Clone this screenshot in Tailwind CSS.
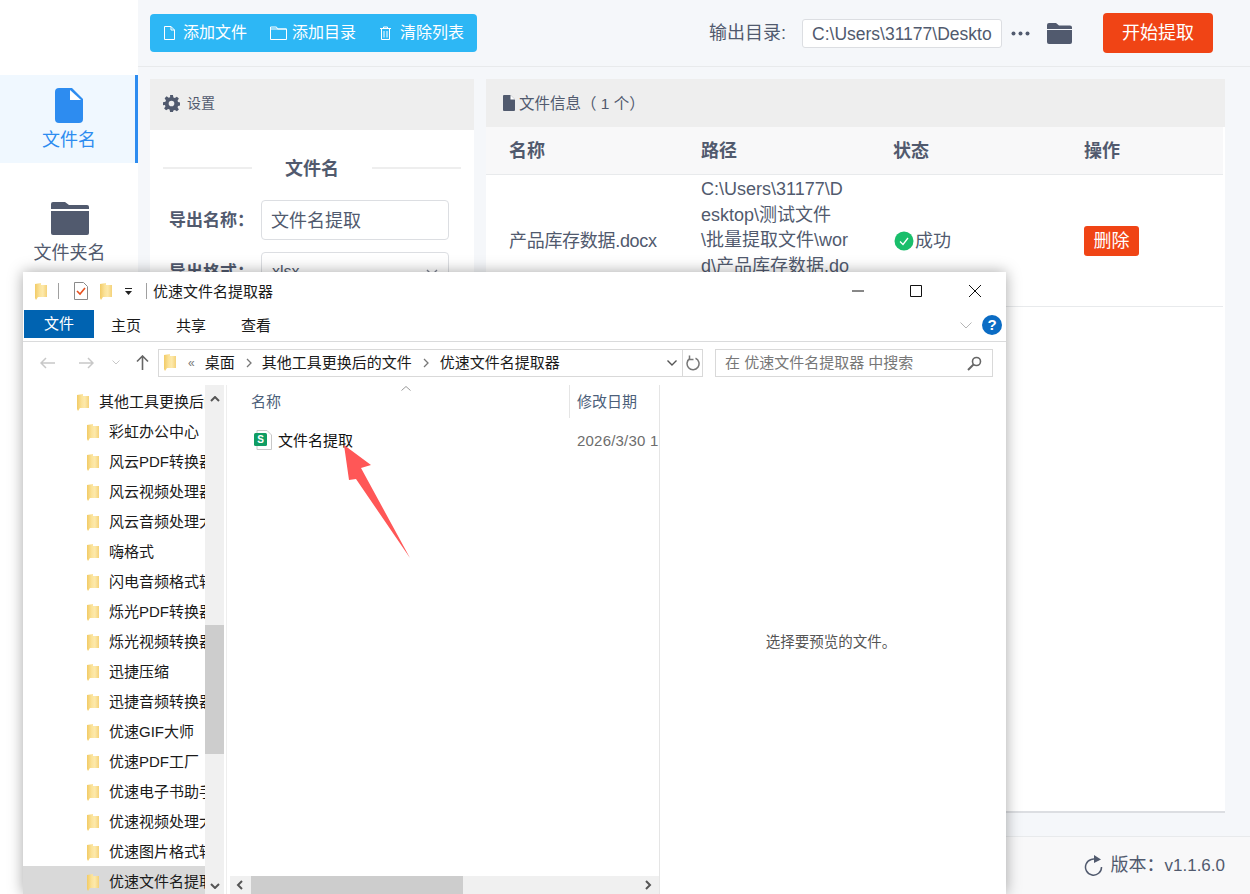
<!DOCTYPE html>
<html lang="zh-CN">
<head>
  <meta charset="UTF-8" />
  <title>文件名提取</title>
  <script src="https://cdn.jsdelivr.net/npm/@tailwindcss/browser@4"></script>
</head>
<body class="font-['Liberation_Sans','Noto_Sans_CJK_SC',sans-serif]">
  <!-- shared folder glyph for the explorer window -->
  <svg class="absolute w-0 h-0">
    <defs>
      <linearGradient id="fg" x1="0" x2="1" y1="0" y2="0"><stop offset="0" stop-color="#f2cb66"/><stop offset=".4" stop-color="#fbe39b"/><stop offset=".65" stop-color="#fde9ab"/><stop offset="1" stop-color="#f4d27a"/></linearGradient>
    </defs>
    <symbol id="yf" viewBox="0 0 12 17"><path d="M0 1L6 0V2H12V14H3L1 17 0 15z" fill="url(#fg)"/></symbol>
  </svg>

  <div class="relative w-[1250px] h-[894px] overflow-hidden flex bg-[#f5f7fa] text-[#515a6e]">
    <!-- sidebar -->
    <aside class="w-[138px] bg-white pt-[75px] shrink-0">
      <div class="h-[88px] bg-[#f0f8ff] border-r-[3px] border-[#2d8cf0] flex flex-col items-center pt-[13px] pl-[3px] text-[#2d8cf0]">
        <svg class="w-[28px] h-[35px]" viewBox="0 0 28 35"><path d="M4 0h13l11 11v20a4 4 0 0 1-4 4H4a4 4 0 0 1-4-4V4a4 4 0 0 1 4-4z" fill="#2d8cf0"/><path d="M15 2v10h11z" fill="#fff"/></svg>
        <span class="text-[18px] leading-[24px] mt-[5px]">文件名</span>
      </div>
      <div class="flex flex-col items-center pt-[39px] pl-[1px]">
        <svg class="w-[38px] h-[33px]" viewBox="0 0 38 33"><path d="M2 0h12l4 3h18a2 2 0 0 1 2 2v2H0V2a2 2 0 0 1 2-2z" fill="#515a6e"/><path d="M0 9h38v22a2 2 0 0 1-2 2H2a2 2 0 0 1-2-2z" fill="#515a6e"/></svg>
        <span class="text-[18px] leading-[24px] mt-[6px]">文件夹名</span>
      </div>
    </aside>

    <main class="flex-1 flex flex-col min-w-0">
      <!-- toolbar -->
      <div class="h-[67px] border-b border-[#e8eaec] flex items-center pl-[12px] shrink-0">
        <div class="w-[327px] h-[38px] bg-[#2db7f5] rounded-[4px] flex items-center text-white text-[16px] pl-[14px]">
          <svg class="w-[11px] h-[14px] mr-[8px]" viewBox="0 0 11 14" fill="none" stroke="#fff"><path d="M.5.500h6.500l3.500 3.500v9.500H.5zM7 .5v3.500h3.500"/></svg>
          <span>添加文件</span>
          <svg class="w-[17px] h-[14px] ml-[23px] mr-[5px]" viewBox="0 0 17 14" fill="none" stroke="#fff"><path d="M.5 1h6l1 2h9v10.500H.5zM.5 3h16"/></svg>
          <span>添加目录</span>
          <svg class="w-[11px] h-[14px] ml-[24px] mr-[9px]" viewBox="0 0 11 14" fill="none" stroke="#fff"><path d="M0 2.500h11M3.500 2.500V1h4v1.500M1.500 3v10.500h8V3M4 5v6.500M7 5v6.500"/></svg>
          <span>清除列表</span>
        </div>
        <span class="ml-[232px] text-[18px]">输出目录:</span>
        <div class="ml-[16px] w-[200px] h-[29px] bg-white border border-[#dcdee2] rounded-[3px] pl-[9px] text-[17.500px] leading-[28px] overflow-hidden whitespace-nowrap">C:\Users\31177\Deskto</div>
        <svg class="w-[19px] h-[5px] ml-[9px]" viewBox="0 0 19 5" fill="#515a6e"><circle cx="2.500" cy="2.500" r="2"/><circle cx="9.500" cy="2.500" r="2"/><circle cx="16.500" cy="2.500" r="2"/></svg>
        <svg class="w-[25px] h-[21px] ml-[17px]" viewBox="0 0 25 21" fill="#515a6e"><path d="M2 0h7l3 2.500h11a2 2 0 0 1 2 2V6H0V2a2 2 0 0 1 2-2z"/><path d="M0 7h25v12a2 2 0 0 1-2 2H2a2 2 0 0 1-2-2z"/></svg>
        <button class="ml-[31px] w-[110px] h-[40px] bg-[#f04415] rounded-[4px] text-white text-[18px]">开始提取</button>
      </div>

      <!-- panels -->
      <div class="flex-1 flex gap-[12px] pl-[12px] pr-[25px] pt-[12px] min-h-0">
        <section class="w-[324px] shrink-0 bg-white h-[733px]">
          <div class="h-[51px] bg-[#eeeeee] flex items-center pl-[13px] pb-[2px] text-[14px]">
            <svg class="w-[17px] h-[17px] mr-[7px]" viewBox="0 0 24 24" fill="#515a6e"><path fill-rule="evenodd" d="M10 0h4l.7 3.400 2 .8L19.600 2.300l2.800 2.800-1.900 2.900.8 2 3.400.7v4l-3.400.7-.8 2 1.900 2.900-2.800 2.800-2.900-1.900-2 .8L14 24h-4l-.7-3.400-2-.8-2.900 1.900-2.800-2.800 1.900-2.900-.8-2L0 14.300v-4l3.400-.7.8-2L2.300 4.700l2.800-2.800L8 3.800l2-.8zM12 8a4 4 0 1 0 0 8 4 4 0 0 0 0-8z"/></svg>
            设置
          </div>
          <div class="flex items-center pl-[13px] pr-[13px] mt-[25px] h-[26px]">
            <div class="w-[89px] h-[2px] bg-[#eeeeee]"></div>
            <div class="flex-1 text-center text-[18px] font-bold pt-[2px]">文件名</div>
            <div class="w-[89px] h-[2px] bg-[#eeeeee]"></div>
          </div>
          <div class="flex items-center mt-[19px] pl-[19px]">
            <span class="w-[92px] text-[17px] font-bold pt-[2px]">导出名称：</span>
            <div class="w-[188px] h-[40px] border border-[#dcdee2] rounded-[4px] pl-[9px] text-[18px] leading-[40px]">文件名提取</div>
          </div>
          <div class="flex items-center mt-[12px] pl-[19px]">
            <span class="w-[92px] text-[17px] font-bold pt-[2px]">导出格式：</span>
            <div class="w-[188px] h-[40px] border border-[#dcdee2] rounded-[4px] pl-[10px] pr-[10px] text-[16px] leading-[38px] flex justify-between items-center">xlsx
              <svg class="w-[12px] h-[7px]" viewBox="0 0 12 7" fill="none" stroke="#808695" stroke-width="1.400"><path d="M1 1l5 5 5-5"/></svg>
            </div>
          </div>
        </section>

        <section class="flex-1 min-w-0 h-[734px] bg-white border-b-2 border-[#dcdee2]">
          <div class="h-[48px] bg-[#eeeeee] flex items-center pl-[17px] pt-[2px] text-[15.500px]">
            <svg class="w-[12px] h-[16px] mr-[4px] -mt-[2px]" viewBox="0 0 12 16" fill="#515a6e"><path d="M1 0h6.500L12 4.500V15a1 1 0 0 1-1 1H1a1 1 0 0 1-1-1V1a1 1 0 0 1 1-1z"/><path d="M7.500 0v4.500H12z" fill="#fff"/></svg>
            文件信息（ 1 个）
          </div>
          <div class="grid grid-cols-[192px_192px_191px_1fr] h-[48px] bg-[#f8f8f9] border-b border-[#e8eaec] items-center pl-[23px] pt-[2px] text-[18px] font-bold mr-[2px]">
            <span>名称</span><span>路径</span><span>状态</span><span>操作</span>
          </div>
          <div class="grid grid-cols-[192px_192px_191px_1fr] h-[132px] border-b border-[#e8eaec] items-center pl-[23px] text-[18px] mr-[2px] overflow-hidden">
            <span class="whitespace-nowrap tracking-[-0.3px] pt-[2px]">产品库存数据.docx</span>
            <div class="w-[150px] h-[131px] pt-[2px] leading-[25.500px] break-all">C:\Users\31177\Desktop\测试文件\批量提取文件\word\产品库存数据.docx</div>
            <div class="flex items-center pl-[1px] pt-[2px]">
              <svg class="w-[20px] h-[20px] mr-[1px] -mt-[2px]" viewBox="0 0 20 20"><circle cx="10" cy="10" r="9.500" fill="#19be6b"/><path d="M6 10.500l3 3 5-6.500" fill="none" stroke="#fff" stroke-width="1.300"/></svg>
              <span>成功</span>
            </div>
            <div><button class="w-[55px] h-[30px] bg-[#f04415] rounded-[3px] text-white text-[18px] block mt-[1px]">删除</button></div>
          </div>
        </section>
      </div>

      <!-- footer -->
      <div class="h-[58px] border-t border-[#e8eaec] flex items-center justify-end pr-[25px] shrink-0 text-[18px] bg-[#f8f8f9]">
        <svg class="w-[19px] h-[21px] mr-[8px]" viewBox="0 0 19 21" fill="none" stroke="#515a6e" stroke-width="1.500"><path d="M14 5.500A8 8 0 1 0 17.500 12"/><path d="M10 0l7 4.500-7 3.500z" fill="#515a6e" stroke="none"/></svg>
        <span>版本：<span class="text-[17px]">v1.1.6.0</span></span>
      </div>
    </main>

    <!-- explorer window on top of the app -->
    <div class="absolute left-[23px] top-[272px] w-[983px] h-[622px] bg-white shadow-[0_0_14px_rgba(0,0,0,0.35)] text-[15px] text-[#1a1a1a] flex flex-col">
      <!-- title bar -->
      <div class="h-[38px] flex items-center shrink-0">
        <svg class="w-[12px] h-[17px] ml-[12px]"><use href="#yf"/></svg>
        <div class="w-px h-[16px] bg-[#a0a0a0] ml-[11px]"></div>
        <svg class="w-[14px] h-[18px] ml-[15px]" viewBox="0 0 14 18"><path d="M.5.500h9l4 4v13H.5z" fill="#fff" stroke="#8a8a8a"/><path d="M3 9l3 3 5-6" fill="none" stroke="#e8511f" stroke-width="1.600"/></svg>
        <svg class="w-[12px] h-[17px] ml-[12px]"><use href="#yf"/></svg>
        <svg class="w-[7px] h-[7px] ml-[13px]" viewBox="0 0 7 7"><path d="M0 0h7v1H0zM0 3h7L3.500 7z" fill="#222"/></svg>
        <div class="w-px h-[16px] bg-[#a0a0a0] ml-[14px]"></div>
        <span class="ml-[6px] pt-[2px]">优速文件名提取器</span>
        <div class="ml-auto flex items-center pr-[25px]">
          <svg class="w-[12px] h-[12px]" viewBox="0 0 12 12"><path d="M0 6h12" stroke="#111"/></svg>
          <svg class="w-[12px] h-[12px] ml-[46px]" viewBox="0 0 12 12"><path d="M.5.500h11v11H.5z" fill="none" stroke="#111"/></svg>
          <svg class="w-[12px] h-[12px] ml-[47px]" viewBox="0 0 12 12"><path d="M0 0l12 12M12 0L0 12" stroke="#111"/></svg>
        </div>
      </div>
      <!-- ribbon tabs -->
      <div class="h-[32px] border-b border-[#dadbdc] flex items-start shrink-0 relative">
        <div class="ml-px w-[70px] h-[28px] bg-[#0063b1] text-white text-center leading-[28px]">文件</div>
        <span class="absolute left-[88px] top-[5px]">主页</span>
        <span class="absolute left-[153px] top-[5px]">共享</span>
        <span class="absolute left-[218px] top-[5px]">查看</span>
        <svg class="absolute left-[937px] top-[12px] w-[12px] h-[7px]" viewBox="0 0 12 7" fill="none" stroke="#b5b5b5"><path d="M.5.500L6 6l5.500-5.500"/></svg>
        <div class="absolute left-[959px] top-[5px] w-[20px] h-[20px] rounded-full bg-[#0b6cc4] text-white text-[15px] font-bold text-center leading-[20px]">?</div>
      </div>
      <!-- address row -->
      <div class="h-[43px] flex items-center shrink-0 relative">
        <svg class="absolute left-[17px] top-[15px] w-[15px] h-[12px]" viewBox="0 0 15 12" fill="none" stroke="#c8c8c8" stroke-width="1.500"><path d="M15 6H1M6 1L1 6l5 5"/></svg>
        <svg class="absolute left-[56px] top-[15px] w-[15px] h-[12px]" viewBox="0 0 15 12" fill="none" stroke="#c8c8c8" stroke-width="1.500"><path d="M0 6h14M9 1l5 5-5 5"/></svg>
        <svg class="absolute left-[89px] top-[18px] w-[8px] h-[5px]" viewBox="0 0 8 5" fill="none" stroke="#c8c8c8"><path d="M.5.500L4 4 7.500.5"/></svg>
        <svg class="absolute left-[113px] top-[13px] w-[13px] h-[15px]" viewBox="0 0 13 15" fill="none" stroke="#666" stroke-width="1.600"><path d="M6.500 15V1M1 6.500L6.500 1 12 6.500"/></svg>
        <div class="ml-[135px] w-[545px] h-[28px] border border-[#d9d9d9] flex items-center relative -mt-[2px]">
          <svg class="w-[12px] h-[17px] ml-[5px]"><use href="#yf"/></svg>
          <span class="ml-[12px] text-[#777] text-[12px]">«</span>
          <span class="ml-[10px] pt-[2px]">桌面</span>
          <svg class="w-[6px] h-[10px] ml-[11px]" viewBox="0 0 6 10" fill="none" stroke="#777" stroke-width="1.300"><path d="M1 1l4 4-4 4"/></svg>
          <span class="ml-[10px] pt-[2px]">其他工具更换后的文件</span>
          <svg class="w-[6px] h-[10px] ml-[11px]" viewBox="0 0 6 10" fill="none" stroke="#777" stroke-width="1.300"><path d="M1 1l4 4-4 4"/></svg>
          <span class="ml-[11px] pt-[2px]">优速文件名提取器</span>
          <svg class="absolute left-[508px] top-[10px] w-[10px] h-[6px]" viewBox="0 0 10 6" fill="none" stroke="#555" stroke-width="1.400"><path d="M.5.500L5 5 9.500.5"/></svg>
          <div class="absolute left-[523px] top-0 w-px h-[26px] bg-[#d9d9d9]"></div>
          <svg class="absolute left-[527px] top-[5px] w-[15px] h-[16px]" viewBox="0 0 15 16" fill="none" stroke="#777" stroke-width="1.500"><path d="M9.500 3.200A6 6 0 1 1 4 3.500"/><path d="M3.500 .5v4h4" /></svg>
        </div>
        <div class="ml-[12px] w-[278px] h-[28px] border border-[#d9d9d9] -mt-[2px] flex items-center pl-[9px] pt-[2px] text-[#777] relative">
          在 优速文件名提取器 中搜索
          <svg class="absolute right-[10px] top-[6px] w-[15px] h-[15px]" viewBox="0 0 15 15" fill="none" stroke="#666" stroke-width="1.600"><circle cx="9.500" cy="5.500" r="4"/><path d="M6.500 8.500L1 14" stroke-width="2"/></svg>
        </div>
      </div>
      <!-- body -->
      <div class="flex-1 flex min-h-0">
        <!-- tree -->
        <div class="w-[182px] shrink-0 overflow-hidden whitespace-nowrap pt-[1px]">
          <div class="h-[30px] flex items-center pl-[54px] pt-[3px]"><svg class="w-[12px] h-[17px] mr-[10px] shrink-0"><use href="#yf"/></svg>其他工具更换后的文件</div>
          <div class="h-[30px] flex items-center pl-[64px] pt-[3px]"><svg class="w-[12px] h-[17px] mr-[10px] shrink-0"><use href="#yf"/></svg>彩虹办公中心</div>
          <div class="h-[30px] flex items-center pl-[64px] pt-[3px]"><svg class="w-[12px] h-[17px] mr-[10px] shrink-0"><use href="#yf"/></svg>风云PDF转换器</div>
          <div class="h-[30px] flex items-center pl-[64px] pt-[3px]"><svg class="w-[12px] h-[17px] mr-[10px] shrink-0"><use href="#yf"/></svg>风云视频处理器</div>
          <div class="h-[30px] flex items-center pl-[64px] pt-[3px]"><svg class="w-[12px] h-[17px] mr-[10px] shrink-0"><use href="#yf"/></svg>风云音频处理大师</div>
          <div class="h-[30px] flex items-center pl-[64px] pt-[3px]"><svg class="w-[12px] h-[17px] mr-[10px] shrink-0"><use href="#yf"/></svg>嗨格式</div>
          <div class="h-[30px] flex items-center pl-[64px] pt-[3px]"><svg class="w-[12px] h-[17px] mr-[10px] shrink-0"><use href="#yf"/></svg>闪电音频格式转换器</div>
          <div class="h-[30px] flex items-center pl-[64px] pt-[3px]"><svg class="w-[12px] h-[17px] mr-[10px] shrink-0"><use href="#yf"/></svg>烁光PDF转换器</div>
          <div class="h-[30px] flex items-center pl-[64px] pt-[3px]"><svg class="w-[12px] h-[17px] mr-[10px] shrink-0"><use href="#yf"/></svg>烁光视频转换器</div>
          <div class="h-[30px] flex items-center pl-[64px] pt-[3px]"><svg class="w-[12px] h-[17px] mr-[10px] shrink-0"><use href="#yf"/></svg>迅捷压缩</div>
          <div class="h-[30px] flex items-center pl-[64px] pt-[3px]"><svg class="w-[12px] h-[17px] mr-[10px] shrink-0"><use href="#yf"/></svg>迅捷音频转换器</div>
          <div class="h-[30px] flex items-center pl-[64px] pt-[3px]"><svg class="w-[12px] h-[17px] mr-[10px] shrink-0"><use href="#yf"/></svg>优速GIF大师</div>
          <div class="h-[30px] flex items-center pl-[64px] pt-[3px]"><svg class="w-[12px] h-[17px] mr-[10px] shrink-0"><use href="#yf"/></svg>优速PDF工厂</div>
          <div class="h-[30px] flex items-center pl-[64px] pt-[3px]"><svg class="w-[12px] h-[17px] mr-[10px] shrink-0"><use href="#yf"/></svg>优速电子书助手</div>
          <div class="h-[30px] flex items-center pl-[64px] pt-[3px]"><svg class="w-[12px] h-[17px] mr-[10px] shrink-0"><use href="#yf"/></svg>优速视频处理大师</div>
          <div class="h-[30px] flex items-center pl-[64px] pt-[3px]"><svg class="w-[12px] h-[17px] mr-[10px] shrink-0"><use href="#yf"/></svg>优速图片格式转换器</div>
          <div class="h-[30px] flex items-center pl-[64px] pt-[3px] bg-[#d9d9d9]"><svg class="w-[12px] h-[17px] mr-[10px] shrink-0"><use href="#yf"/></svg>优速文件名提取器</div>
        </div>
        <!-- tree scrollbar -->
        <div class="w-[19px] shrink-0 bg-[#f0f0f0] flex flex-col items-center relative">
          <svg class="mt-[11px] w-[10px] h-[6px]" viewBox="0 0 10 6" fill="none" stroke="#555" stroke-width="2"><path d="M1 5l4-4 4 4"/></svg>
          <div class="absolute left-0 top-[240px] w-full h-[129px] bg-[#cdcdcd]"></div>
          <svg class="absolute left-[5px] bottom-[5px] w-[10px] h-[6px]" viewBox="0 0 10 6" fill="none" stroke="#555" stroke-width="2"><path d="M1 1l4 4 4-4"/></svg>
        </div>
        <div class="w-[3px] shrink-0 border-r border-[#eeeeee]"></div>
        <!-- file list -->
        <div class="ml-[3px] w-[430px] shrink-0 flex flex-col relative border-r border-[#e5e5e5]">
          <svg class="absolute left-[171px] top-[1px] w-[10px] h-[5px]" viewBox="0 0 10 5" fill="none" stroke="#999"><path d="M.5 4.500L5 .5l4.500 4"/></svg>
          <div class="h-[33px] flex items-center text-[#4c607a] relative shrink-0">
            <span class="ml-[21px] w-[318px] pt-[2px]">名称</span>
            <div class="w-px h-[33px] bg-[#e5e5e5]"></div>
            <span class="ml-[7px] pt-[2px]">修改日期</span>
          </div>
          <div class="h-[44px] flex items-center whitespace-nowrap overflow-hidden pt-[2px]">
            <svg class="ml-[24px] w-[18px] h-[20px] shrink-0 -mt-[2px]" viewBox="0 0 18 20"><path d="M3 .5h10l4.500 4.500v14.500H3z" fill="#fff" stroke="#c8c8c8"/><rect x="0" y="3" width="13" height="13" rx="1.500" fill="#0f9d63"/><text x="6.500" y="13" text-anchor="middle" font-size="10" font-weight="700" fill="#fff">S</text></svg>
            <span class="ml-[6px] w-[299px] text-[#111]">文件名提取</span>
            <span class="text-[#6d6d6d] tracking-[0.2px]">2026/3/30 1</span>
          </div>
          <!-- horizontal scrollbar -->
          <div class="mt-auto h-[18px] bg-[#f0f0f0] flex items-center shrink-0">
            <svg class="ml-[6px] w-[7px] h-[10px]" viewBox="0 0 7 10" fill="none" stroke="#555" stroke-width="2"><path d="M6 1L2 5l4 4"/></svg>
            <div class="ml-[8px] w-[212px] h-full bg-[#cdcdcd]"></div>
            <svg class="ml-auto mr-[7px] w-[7px] h-[10px]" viewBox="0 0 7 10" fill="none" stroke="#555" stroke-width="2"><path d="M1 1l4 4-4 4"/></svg>
          </div>
        </div>
        <!-- preview -->
        <div class="flex-1 flex items-center justify-center pt-[6px] text-[14.500px] text-[#555] pr-[4px]">选择要预览的文件。</div>
      </div>
      <!-- red pointer drawn over the file row -->
      <svg class="absolute left-[300px] top-[160px] w-[110px] h-[130px]" viewBox="0 0 110 130"><path d="M21 13L48 33 38 36 87 126 33 47 26 48z" fill="#ff5757"/></svg>
    </div>
  </div>
</body>
</html>
